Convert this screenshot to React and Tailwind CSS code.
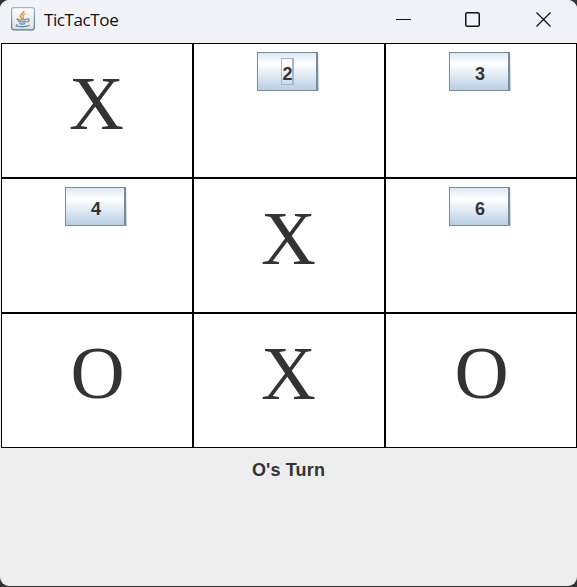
import React from "react";

const cells = [
  { mark: "X" },
  { number: 2, focused: true },
  { number: 3 },
  { number: 4 },
  { mark: "X" },
  { number: 6 },
  { mark: "O" },
  { mark: "X" },
  { mark: "O" },
];

function JavaIcon() {
  return (
    <svg width="24" height="24" viewBox="0 0 24 24" fill="none">
      <defs>
        <linearGradient id="tile" x1="0" y1="0" x2="0" y2="1">
          <stop offset="0" stopColor="#ffffff" />
          <stop offset="1" stopColor="#dcdfe2" />
        </linearGradient>
        <linearGradient id="edge" x1="0" y1="0" x2="0" y2="1">
          <stop offset="0" stopColor="#a9b5bf" />
          <stop offset="1" stopColor="#4f7890" />
        </linearGradient>
      </defs>
      <rect x="0.6" y="0.6" width="22.8" height="22.2" rx="2.2" fill="url(#tile)" stroke="url(#edge)" strokeWidth="1.2" />
      <path d="M12.8 3.8c1 2-3.6 3.1-3.5 5.3.1 1.3 1.5 2 2 3.3" stroke="#ed872d" strokeWidth="1.5" />
      <path d="M14.6 6.7c-2.1.7-3.2 1.6-2.6 2.8.4.8.9 1.4.1 2.6" stroke="#ed872d" strokeWidth="1.2" />
      <path d="M7.5 11.8c-2.6.7-1.4 1.3 3.2 1.2 2.1 0 4-.3 5.3-.7M7.3 14.3c1.6 1 5.9.9 7.8.1M8.2 16.4c1.4.8 4.4.7 6 .1" stroke="#55809f" strokeWidth="1.15" />
      <path d="M16 12c3.2-.9 2.8 2.6-.5 3.2" stroke="#55809f" strokeWidth="1.1" />
      <path d="M6.6 17.6c-4.2 1.4 1 2.1 5.3 2 4.1-.1 6.5-.8 6.4-1.7" stroke="#55809f" strokeWidth="1.1" />
    </svg>
  );
}

function TitleBar() {
  return (
    <header className="flex h-[43px] shrink-0 items-start bg-[#f1f3f9] pl-[11px]">
      <div className="mt-[7px] h-6 w-6">
        <JavaIcon />
      </div>
      <h1 className="ml-[9px] mt-[8px] grow font-['Open_Sans','Noto_Sans',sans-serif] text-[17px] leading-6 tracking-[-0.4px] text-[#111111]">
        TicTacToe
      </h1>
      <div className="mr-[26px] mt-3 flex text-[#111111]">
        <svg className="mr-[54px]" width="15" height="16" viewBox="0 0 15 16">
          <path d="M0 7.5h15" stroke="currentColor" />
        </svg>
        <svg className="mr-14" width="15" height="16" viewBox="0 0 15 16" fill="none">
          <rect x="0.75" y="0.75" width="13.5" height="13.5" rx="1.5" stroke="currentColor" strokeWidth="1.5" />
        </svg>
        <svg width="15" height="16" viewBox="0 0 15 16" fill="none">
          <path d="M.5.5l14 14M14.5.5l-14 14" stroke="currentColor" strokeWidth="1.3" />
        </svg>
      </div>
    </header>
  );
}

function NumberButton({ number, focused }) {
  return (
    <div className="mr-0.5 mt-2 h-[39px] w-[62px] bg-linear-to-b from-[#f2f6fa] to-[#bfd3e6] pr-px">
      <button className="flex h-[39px] w-[61px] items-start border border-r-2 border-[#7a8a99] bg-linear-to-b from-[#dfe9f3] via-white via-30% to-[#b8cfe5] pl-[23px] pt-[5px] text-lg font-bold leading-[27px]">
        <span
          className={
            focused
              ? "flex h-[27px] w-[13px] justify-center border border-r-2 border-[#a3b8cc] pl-px leading-[31px]"
              : "h-[27px] w-[13px] pl-px pt-[3px] text-center"
          }
        >
          {number}
        </span>
      </button>
    </div>
  );
}

function Cell({ cell }) {
  return (
    <div className="flex items-start justify-center border border-black bg-white">
      {cell.mark ? (
        <span
          className={
            cell.mark === "X"
              ? "mr-px mt-4 font-['Liberation_Serif',serif] text-[76px] leading-[86px]"
              : "ml-px mt-4 font-['Liberation_Serif',serif] text-[75px] leading-[86px]"
          }
        >
          {cell.mark}
        </span>
      ) : (
        <NumberButton {...cell} />
      )}
    </div>
  );
}

export default function App() {
  return (
    <div className="h-[587px] w-[577px] overflow-hidden bg-[#333333] pb-px font-['Liberation_Sans',sans-serif] text-[#333333]">
      <main className="flex h-[586px] flex-col overflow-hidden rounded-[9px] bg-[#eeeeee]">
        <TitleBar />
        <section className="ml-px grid h-[405px] w-[576px] shrink-0 grid-cols-3 grid-rows-3">
          {cells.map((cell, i) => (
            <Cell key={i} cell={cell} />
          ))}
        </section>
        <p className="mt-[11px] text-center text-lg font-bold leading-[22px] tracking-[0.15px]">O's Turn</p>
      </main>
    </div>
  );
}
